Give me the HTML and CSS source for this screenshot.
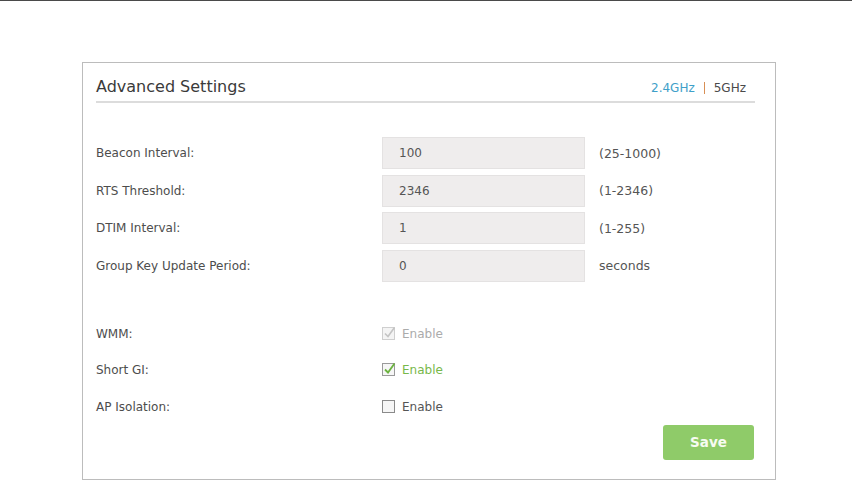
FILE: index.html
```html
<!DOCTYPE html>
<html lang="en">
<head>
    <meta charset="UTF-8">
    <meta name="viewport" content="width=device-width, initial-scale=1.0">
    <title>Advanced Settings</title>
    <link rel="stylesheet" href="styles.css">
</head>
<body>
    <div class="top-bar"></div>

    <div class="panel">
        <!-- Header -->
        <div class="panel-head">
            <h2>Advanced Settings</h2>
            <div class="band-tabs">
                <span class="tab active">2.4GHz</span>
                <span class="tab-sep"></span>
                <span class="tab">5GHz</span>
            </div>
        </div>

        <!-- Text fields -->
        <div class="fields">
            <div class="form-row">
                <label class="row-label">Beacon Interval:</label>
                <input class="text-box" type="text" value="100">
                <span class="hint">(25-1000)</span>
            </div>
            <div class="form-row">
                <label class="row-label">RTS Threshold:</label>
                <input class="text-box" type="text" value="2346">
                <span class="hint">(1-2346)</span>
            </div>
            <div class="form-row">
                <label class="row-label">DTIM Interval:</label>
                <input class="text-box" type="text" value="1">
                <span class="hint">(1-255)</span>
            </div>
            <div class="form-row">
                <label class="row-label">Group Key Update Period:</label>
                <input class="text-box" type="text" value="0">
                <span class="hint">seconds</span>
            </div>
        </div>

        <!-- Checkboxes -->
        <div class="checks">
            <div class="check-row">
                <span class="row-label">WMM:</span>
                <span class="check disabled">
                    <svg width="14" height="14" viewBox="0 0 14 14">
                        <rect x="0.5" y="1.5" width="12" height="12" fill="#f4f4f4" stroke="#cfcfcf"/>
                        <polyline points="3,7.5 6,10.5 12.5,1.5" fill="none" stroke="#c4c4c4" stroke-width="1.6"/>
                    </svg>
                    Enable
                </span>
            </div>
            <div class="check-row">
                <span class="row-label">Short GI:</span>
                <span class="check on">
                    <svg width="14" height="14" viewBox="0 0 14 14">
                        <rect x="0.5" y="1.5" width="12" height="12" fill="#f6f6f6" stroke="#9a9a9a"/>
                        <polyline points="3,7.5 6,10.5 12.5,1.5" fill="none" stroke="#6cb33f" stroke-width="1.8"/>
                    </svg>
                    Enable
                </span>
            </div>
            <div class="check-row">
                <span class="row-label">AP Isolation:</span>
                <span class="check">
                    <svg width="14" height="14" viewBox="0 0 14 14">
                        <rect x="0.5" y="1.5" width="12" height="12" fill="#f6f6f6" stroke="#8a8a8a"/>
                    </svg>
                    Enable
                </span>
            </div>
        </div>

        <div class="actions">
            <button class="save-btn">Save</button>
        </div>
    </div>
</body>
</html>
```

FILE: styles.css
```css
body {
    margin: 0;
    font-family: "DejaVu Sans", Verdana, sans-serif;
    color: #555;
    background: #fff;
}
.top-bar {
    height: 1px;
    background-color: #4a4a4a;
}
.panel {
    box-sizing: border-box;
    width: 694px;
    margin: 61px 0 0 82px;
    padding: 14px 20px 19px 13px;
    border: 1px solid #bcbcbc;
}
.panel-head {
    display: flex;
    justify-content: space-between;
    align-items: baseline;
    padding-bottom: 4px;
    border-bottom: 2px solid #dcdcdc;
}
.panel-head h2 {
    margin: 0;
    font-size: 16px;
    line-height: 20px;
    font-weight: normal;
    color: #3a3a3a;
}
.band-tabs {
    display: flex;
    align-items: center;
    font-size: 12px;
    margin-right: 9px;
}
.tab {
    color: #4a4a4a;
}
.tab.active {
    color: #3ea0c9;
}
.tab-sep {
    width: 1px;
    height: 12px;
    margin: 0 9px 0 9px;
    background-color: #d88f55;
}
.fields {
    margin-top: 34px;
    display: flex;
    flex-direction: column;
    gap: 5.67px;
}
.form-row, .check-row {
    display: flex;
    align-items: center;
    font-size: 12px;
}
.form-row {
    height: 32px;
}
.row-label {
    width: 286px;
    color: #4d4d4d;
}
.text-box {
    box-sizing: border-box;
    width: 203px;
    height: 32px;
    padding: 0 16px;
    border: 1px solid #e4e2e2;
    background-color: #efeded;
    font-family: inherit;
    font-size: 12px;
    color: #555;
    outline: none;
}
.hint {
    margin-left: 14px;
    font-size: 12.5px;
    color: #555;
}
.checks {
    margin-top: 34px;
}
.check-row {
    height: 36.3px;
}
.check {
    display: flex;
    align-items: center;
    gap: 6px;
    color: #555;
}
.check svg {
    display: block;
    margin-top: -2px;
}
.check.disabled {
    color: #ababab;
}
.check.on {
    color: #78b84a;
}
.actions {
    display: flex;
    justify-content: flex-end;
}
.save-btn {
    width: 91px;
    height: 35px;
    margin-right: 1px;
    border: none;
    border-radius: 3px;
    background-color: #8fcb69;
    color: #f7fbf2;
    font-family: inherit;
    font-size: 13.5px;
    font-weight: bold;
}
```
